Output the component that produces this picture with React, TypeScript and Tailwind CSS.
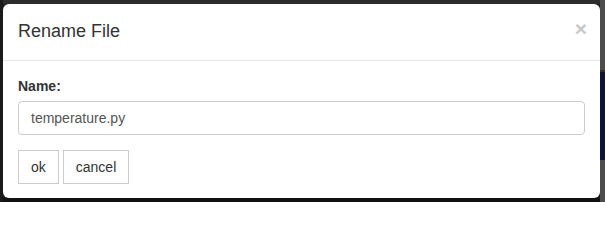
import { useState } from "react";

export default function App() {
  const [name, setName] = useState("temperature.py");

  return (
    <div className="w-[605px] h-[202px] overflow-hidden bg-[#1c1c1c] flex font-['Liberation_Sans',Arial,sans-serif]">
      <div className="w-[3px] bg-[#1a1a1a]" />
      <div className="flex flex-col">
        <div className="h-[4px] bg-[#2c2c2c]" />
        <div className="w-[597px] h-[194px] bg-white rounded-[6px] flex flex-col">
          <div className="h-[57px] border-b border-[#e5e5e5] flex items-center justify-between pl-[15px] pr-[13px]">
            <h4 className="text-[18px] leading-[26px] text-[#333] -mt-[3px]">Rename File</h4>
            <button className="text-[21px] leading-none font-bold text-[#c8c8c8] -mt-[7px]">×</button>
          </div>
          <div className="px-[15px] pt-[15px] flex flex-col">
            <label className="text-[14px] font-bold text-[#333] leading-[20px] mb-[5px]">Name:</label>
            <input
              value={name}
              onChange={(e) => setName(e.target.value)}
              className="h-[34px] w-[567px] border border-[#ccc] rounded-[4px] px-[12px] text-[14px] text-[#555] outline-none"
            />
          </div>
          <div className="px-[15px] pt-[15px] flex gap-[4px]">
            <button className="h-[34px] px-[12px] border border-[#ccc] text-[14px] text-[#333] bg-white">ok</button>
            <button className="h-[34px] px-[12px] border border-[#ccc] text-[14px] text-[#333] bg-white">cancel</button>
          </div>
        </div>
        <div className="h-[4px] bg-[#111]" />
      </div>
      <div className="w-[5px] flex flex-col">
        <div className="h-[70px] bg-[#4c4c4c]" />
        <div className="h-[2px] bg-[#3a3020]" />
        <div className="h-[88px] bg-[#0e1433]" />
        <div className="flex-1 bg-[#4c4c4c]" />
      </div>
    </div>
  );
}
